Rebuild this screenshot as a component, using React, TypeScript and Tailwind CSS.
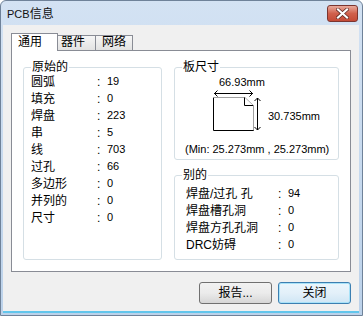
import React from "react";

const font = "font-['Liberation_Sans','Noto_Sans_CJK_SC',sans-serif]";

const origin = [
  ["圆弧", "19"],
  ["填充", "0"],
  ["焊盘", "223"],
  ["串", "5"],
  ["线", "703"],
  ["过孔", "66"],
  ["多边形", "0"],
  ["并列的", "0"],
  ["尺寸", "0"],
];

const others = [
  ["焊盘/过孔 孔", "94"],
  ["焊盘槽孔洞", "0"],
  ["焊盘方孔孔洞", "0"],
  ["DRC妨碍", "0"],
];

function Row({ label, value, labelW }: { label: string; value: string; labelW: string }) {
  return (
    <div className="flex h-[17px] items-center whitespace-nowrap">
      <span className={labelW}>{label}</span>
      <span className="w-[10px]">:</span>
      <span className="text-[11px]">{value}</span>
    </div>
  );
}

function Group({ title, className, children }: { title: string; className: string; children: React.ReactNode }) {
  return (
    <fieldset className={`rounded-[3px] border border-[#d5dfe5] pl-[7px] ${className}`}>
      <legend className="px-[1px] leading-[12px]">{title}</legend>
      {children}
    </fieldset>
  );
}

function BoardFigure() {
  return (
    <svg width="50" height="44" viewBox="0 0 50 44" className="shrink-0">
      {/* width arrow */}
      <line x1="3" y1="4.5" x2="42" y2="4.5" stroke="#000" />
      <polyline points="6.5,1.5 3.5,4.5 6.5,7.5" fill="none" stroke="#000" />
      <polyline points="38.5,1.5 41.5,4.5 38.5,7.5" fill="none" stroke="#000" />
      {/* sheet */}
      <polyline points="2.5,8.5 2.5,41.5 42.5,41.5 42.5,16.5" fill="none" stroke="#000" />
      <line x1="2.5" y1="8.5" x2="34" y2="8.5" stroke="#a0a0a0" />
      <line x1="42.5" y1="17" x2="42.5" y2="41" stroke="#a0a0a0" />
      <polyline points="33.5,8.5 33.5,16.5 42,16.5" fill="none" stroke="#000" />
      <line x1="34" y1="8.5" x2="42.5" y2="16.5" stroke="#b0b0b0" />
      {/* height arrow */}
      <line x1="46.5" y1="9" x2="46.5" y2="41" stroke="#000" />
      <polyline points="43.5,12 46.5,9 49.5,12" fill="none" stroke="#000" />
      <polyline points="43.5,38 46.5,41 49.5,38" fill="none" stroke="#000" />
    </svg>
  );
}

export default function App() {
  return (
    <div className={`${font} flex h-[316px] w-[363px] flex-col rounded-t-[6px] border border-[#6f8299] bg-gradient-to-b from-[#d3e2f3] to-[#bcd2ea] text-[12px] text-black`}>
      {/* title bar */}
      <div className="flex h-[24px] items-start justify-between">
        <span className="pl-[6px] pt-[6px] leading-[14px] text-[#111]">
          <span className="text-[11px]">PCB</span>信息
        </span>
        <button className="mr-[4px] mt-[4px] flex h-[17px] w-[31px] items-center justify-center rounded-[3px] border border-[#7b3530] bg-gradient-to-b from-[#e8a99c] via-[#d0604c] to-[#c44a36]">
          <svg width="13" height="11" viewBox="0 0 13 11">
            <path d="M2 1.5 L11 9.5 M11 1.5 L2 9.5" stroke="#5a2620" strokeWidth="3.6" strokeLinecap="square" />
            <path d="M2 1.5 L11 9.5 M11 1.5 L2 9.5" stroke="#fff" strokeWidth="2.2" strokeLinecap="square" />
          </svg>
        </button>
      </div>

      {/* body */}
      <div className="mb-[2px] ml-[2px] mr-[3px] flex flex-1 flex-col border-b-2 border-b-[#62c6ec] bg-[#f0f0f0] pl-[8px] pr-[8px] pt-[8px]">
        {/* tabs */}
        <div className="flex h-[17px] items-end">
          <div className="relative z-10 -mb-[1px] h-[18px] w-[47px] border border-b-0 border-[#898c95] bg-white pl-[6px] leading-[16px]">
            通用
          </div>
          <div className="h-[15px] w-[38px] border border-l-0 border-b-0 border-[#898c95] bg-gradient-to-b from-[#f6f6f6] to-[#e2e2e2] pl-[3px] leading-[13px]">
            器件
          </div>
          <div className="h-[15px] w-[37px] border border-l-0 border-b-0 border-[#898c95] bg-gradient-to-b from-[#f6f6f6] to-[#e2e2e2] pl-[6px] leading-[13px]">
            网络
          </div>
        </div>

        {/* panel */}
        <div className="flex h-[222px] gap-[12px] border border-[#898c95] bg-white pl-[11px] pt-[10px]">
          <Group title="原始的" className="h-[199px] w-[139px]">
            {origin.map(([l, v]) => (
              <Row key={l} label={l} value={v} labelW="w-[66px]" />
            ))}
          </Group>

          <div className="flex flex-col gap-[9px]">
            <Group title="板尺寸" className="h-[99px] w-[165px]">
              <div className="mt-[2px] pl-[37px] text-[11px] leading-[14px]">66.93mm</div>
              <div className="flex items-start pl-[29px]">
                <BoardFigure />
                <span className="ml-[7px] pt-[20px] text-[11px] leading-[14px]">30.735mm</span>
              </div>
              <div className="mt-[9px] pl-[3px] text-[11px] leading-[14px] whitespace-nowrap">(Min: 25.273mm , 25.273mm)</div>
            </Group>

            <Group title="别的" className="h-[91px] w-[165px]">
              <div className="mt-[4px] pl-[4px]">
                {others.map(([l, v]) => (
                  <Row key={l} label={l} value={v} labelW="w-[92px]" />
                ))}
              </div>
            </Group>
          </div>
        </div>

        {/* buttons */}
        <div className="mt-[10px] flex justify-end gap-[6px]">
          <button className="h-[22px] w-[73px] rounded-[3px] border border-[#707070] bg-gradient-to-b from-[#f2f2f2] via-[#ebebeb] to-[#d6d6d6] leading-[20px]">
            报告...
          </button>
          <button className="h-[22px] w-[73px] rounded-[3px] border border-[#3c7fb1] bg-gradient-to-b from-[#eaf6fd] via-[#e3f0f9] to-[#cfe6f5] leading-[20px] shadow-[inset_0_0_0_1px_#a8e2f8]">
            关闭
          </button>
        </div>
      </div>
    </div>
  );
}
